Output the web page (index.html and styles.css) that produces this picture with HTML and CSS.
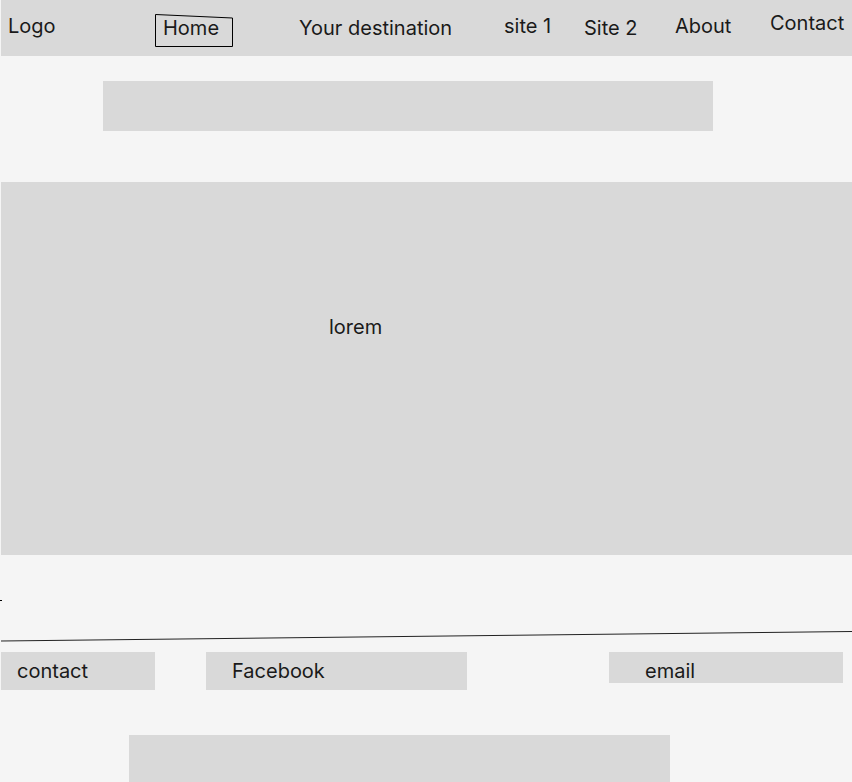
FILE: index.html
```html
<!DOCTYPE html>
<html lang="en">
<head>
<meta charset="utf-8">
<title>Wireframe</title>
<link rel="stylesheet" href="styles.css">
</head>
<body>
<header class="nav">
  <div class="nav-item logo">Logo</div>
  <div class="nav-item home">
    <svg class="home-frame" width="79" height="34" viewBox="0 0 79 34" aria-hidden="true">
      <polygon points="0.5,0.5 77.5,4 77.5,32.5 0.5,32.5" fill="none" stroke="#000" stroke-width="1"/>
    </svg>
    <span class="home-label">Home</span>
  </div>
  <div class="nav-item dest">Your destination</div>
  <div class="nav-item site1">site 1</div>
  <div class="nav-item site2">Site 2</div>
  <div class="nav-item about">About</div>
  <div class="nav-item contact">Contact</div>
</header>

<div class="banner"></div>

<main class="hero">lorem</main>

<div class="divider">
  <svg width="852" height="97" viewBox="0 0 852 97" aria-hidden="true">
    <line x1="0" y1="45.5" x2="2" y2="45.5" stroke="#000" stroke-width="1"/>
    <line x1="1" y1="86" x2="852" y2="76.5" stroke="#222" stroke-width="1"/>
  </svg>
</div>

<footer class="footer">
  <div class="foot-box foot-contact">contact</div>
  <div class="foot-box foot-facebook">Facebook</div>
  <div class="foot-box foot-email">email</div>
</footer>

<div class="bottom-box"></div>
</body>
</html>
```

FILE: styles.css
```css
html, body {
  margin: 0;
  padding: 0;
  overflow: hidden;
}
body {
  background: #f5f5f5;
  font-family: Inter, "Noto Sans", sans-serif;
  font-size: 20px;
  line-height: 24px;
  color: #1a1a1a;
  width: 852px;
  height: 782px;
}

.nav {
  margin-left: 1px;
  height: 56px;
  background: #d9d9d9;
  display: flex;
  align-items: flex-start;
}
.nav-item { white-space: nowrap; }
.logo { width: 154px; padding-left: 7px; box-sizing: border-box; margin-top: 14px; }
.home {
  position: relative;
  width: 78px;
  height: 33px;
  margin-top: 14px;
  margin-right: 66px;
  box-sizing: border-box;
  padding: 2px 0 0 8px;
}
.home-frame { position: absolute; left: 0; top: 0; }
.dest { width: 205px; margin-top: 16px; }
.site1 { width: 80px; margin-top: 14px; }
.site2 { width: 91px; margin-top: 16px; }
.about { width: 95px; margin-top: 14px; }
.contact { margin-top: 11px; }

.banner {
  margin: 25px 0 0 103px;
  width: 610px;
  height: 50px;
  background: #d9d9d9;
}

.hero {
  display: block;
  margin: 51px 0 0 1px;
  width: 851px;
  height: 373px;
  box-sizing: border-box;
  padding: 133px 0 0 328px;
  background: #d9d9d9;
}

.divider { height: 97px; }
.divider svg { display: block; }

.footer {
  display: flex;
  align-items: flex-start;
  height: 38px;
}
.foot-box {
  background: #d9d9d9;
  box-sizing: border-box;
  padding-top: 7px;
  height: 38px;
}
.foot-contact { margin-left: 1px; width: 154px; padding-left: 16px; }
.foot-facebook { margin-left: 51px; width: 261px; padding-left: 26px; }
.foot-email { margin-left: 142px; width: 234px; height: 31px; padding-left: 36px; }

.bottom-box {
  margin: 45px 0 0 129px;
  width: 541px;
  height: 60px;
  background: #d9d9d9;
}
```
